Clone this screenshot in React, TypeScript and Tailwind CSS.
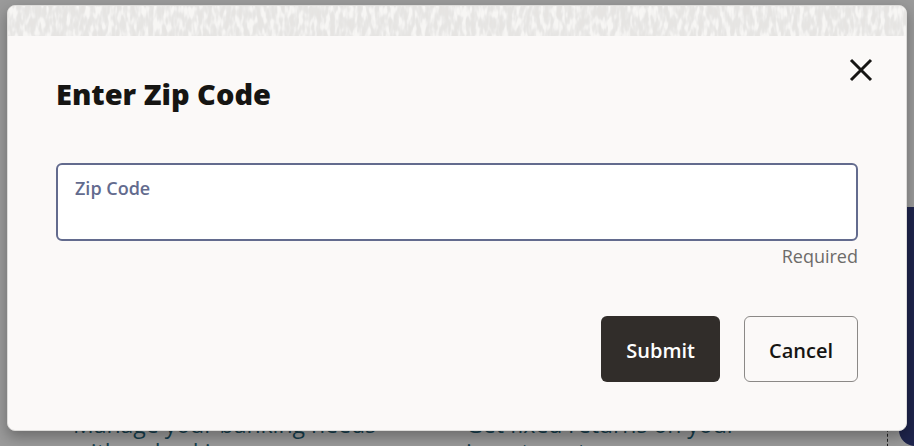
import React from "react";

function Backdrop() {
  return (
    <div aria-hidden="true" className="absolute inset-0 overflow-hidden bg-[#9a9a9a]">
      <div className="absolute top-[410px] left-[73px] w-[330px] text-[23px] leading-7 font-medium text-[#153e4d]">
        Manage your banking needs with a checking
      </div>
      <div className="absolute top-[410px] left-[466px] w-[300px] text-[23px] leading-7 font-medium text-[#153e4d]">
        Get fixed returns on your investment
      </div>
      <div className="absolute top-[207px] right-[26px] h-[260px] border-l border-dashed border-[#1f1f1f]" />
      <div className="absolute top-[207px] -right-12 h-[239px] w-[63px] rounded-r-2xl rounded-bl-2xl bg-[#1e244c]" />
    </div>
  );
}

function TextureStrip() {
  return (
    <svg aria-hidden="true" className="block h-[30px] w-full bg-[#ebe9e7]">
      <filter id="grain" x="0" y="0" width="100%" height="100%" colorInterpolationFilters="sRGB">
        <feTurbulence type="fractalNoise" baseFrequency="0.22 0.08" numOctaves="2" seed="8" />
        <feColorMatrix values="1 0 0 0 0  1 0 0 0 0  1 0 0 0 0  0 0 0 0 1" />
        <feComponentTransfer>
          <feFuncR type="table" tableValues="0.902 0.902 0.902 0.902 0.906 0.92 0.95 0.97 0.97 0.97 0.97" />
          <feFuncG type="table" tableValues="0.898 0.898 0.898 0.898 0.902 0.916 0.946 0.966 0.966 0.966 0.966" />
          <feFuncB type="table" tableValues="0.89 0.89 0.89 0.89 0.895 0.91 0.94 0.96 0.96 0.96 0.96" />
        </feComponentTransfer>
      </filter>
      <rect width="100%" height="100%" filter="url(#grain)" />
    </svg>
  );
}

export default function App() {
  return (
    <div className="relative min-h-screen overflow-hidden font-['Open_Sans','Noto_Sans',sans-serif] text-[#161513]">
      <Backdrop />
      <div className="relative px-[7px] pt-[5px] pb-[15px]">
        <section
          role="dialog"
          aria-modal="true"
          aria-labelledby="dialog-title"
          className="overflow-hidden rounded-lg border border-[#dddcda] bg-[#fbf9f8] shadow-[0_6px_14px_rgba(0,0,0,0.3)]"
        >
          <TextureStrip />
          <form className="px-12 pb-12" onSubmit={(e) => e.preventDefault()}>
            <header className="flex items-start justify-between pt-4">
              <h1 id="dialog-title" className="pt-[22px] text-[29px] leading-10 font-extrabold">
                Enter Zip Code
              </h1>
              <button type="button" aria-label="Close" className="-mr-[21px] flex size-9 items-center justify-center">
                <svg viewBox="0 0 24 24" className="size-6" fill="none" stroke="currentColor" strokeWidth="3">
                  <path d="M2 2 22 22M22 2 2 22" />
                </svg>
              </button>
            </header>
            <div className="mt-[49px] flex h-[78px] flex-col rounded-md border-2 border-[#636b8e] bg-white px-[17px] pt-[11px]">
              <label htmlFor="zip" className="text-lg leading-6 font-semibold text-[#636b8e]">
                Zip Code
              </label>
              <input id="zip" type="text" required className="w-full flex-1 text-lg outline-none" />
            </div>
            <p className="mt-[3px] text-right text-lg leading-6 text-[#6d6b69]">Required</p>
            <div className="mt-12 flex justify-end gap-6">
              <button type="submit" className="h-[66px] rounded-md bg-[#312d2a] px-[25px] pt-1 text-xl font-semibold text-white">
                Submit
              </button>
              <button type="button" className="h-[66px] rounded-md border border-[#8b8987] px-6 pt-1 text-xl font-semibold">
                Cancel
              </button>
            </div>
          </form>
        </section>
      </div>
    </div>
  );
}
